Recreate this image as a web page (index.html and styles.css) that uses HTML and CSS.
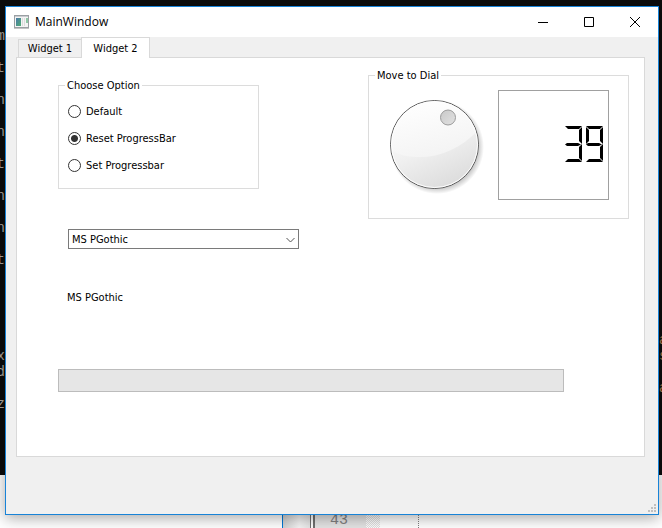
FILE: index.html
```html
<!DOCTYPE html>
<html lang="en">
<head>
<meta charset="utf-8">
<title>MainWindow</title>
<link rel="stylesheet" href="styles.css">
</head>
<body>
<div class="desktop" aria-hidden="true">
  <div class="console">
<pre class="console-left">m

t

n

n

t

n

n

t





x
d

z</pre>
<pre class="console-right">a
s

a</pre>
  </div>
  <div class="editor">
    <div class="editor-panel"></div>
    <div class="editor-side"></div>
    <div class="editor-split"></div>
    <div class="editor-gutter">43</div>
    <div class="editor-fold"></div>
    <div class="editor-code"></div>
  </div>
</div>

<main class="window">
  <header class="titlebar">
    <svg class="app-icon" viewBox="0 0 16 14" aria-hidden="true">
      <defs>
        <linearGradient id="app" x1="0" y1="0" x2="1" y2="1"><stop offset="0" stop-color="#4a78a8"/><stop offset="1" stop-color="#4fae74"/></linearGradient>
      </defs>
      <rect x=".5" y=".5" width="14" height="12" fill="#f4f4f4" stroke="#9a9fa3"/>
      <path d="M1 1.500h13" stroke="#c9ccd0"/>
      <rect x="2" y="3" width="5" height="8" fill="url(#app)"/>
      <path d="M8.500 3v8M10.500 3v8" stroke="#dcdcdc"/>
      <rect x="12" y="3" width="2" height="5" fill="#8fc7a5"/>
      <path d="M0 13.500h15" stroke="#c4c4c4"/>
    </svg>
    <h1 class="title">MainWindow</h1>
    <button class="caption-button" aria-label="Minimize"><svg viewBox="0 0 10 10"><path d="M0 5.500h10"/></svg></button>
    <button class="caption-button" aria-label="Maximize"><svg viewBox="0 0 10 10"><path d="M.5 .5h9v9h-9z"/></svg></button>
    <button class="caption-button" aria-label="Close"><svg viewBox="0 0 10 10"><path d="M0 0l10 10M10 0L0 10"/></svg></button>
  </header>

  <div class="content">
    <div class="tabs" role="tablist">
      <button class="tab" role="tab" aria-selected="false">Widget 1</button>
      <button class="tab tab-active" role="tab" aria-selected="true">Widget 2</button>
    </div>
    <section class="page" role="tabpanel">
      <div class="groups">
        <fieldset class="group options">
          <legend>Choose Option</legend>
          <label class="option"><input type="radio" name="option">Default</label>
          <label class="option"><input type="radio" name="option" checked>Reset ProgressBar</label>
          <label class="option"><input type="radio" name="option">Set Progressbar</label>
        </fieldset>
        <fieldset class="group meter">
          <legend>Move to Dial</legend>
          <div class="dial">
            <svg viewBox="0 0 96 96" aria-hidden="true">
              <defs>
                <radialGradient id="shadow"><stop offset=".88" stop-color="#000" stop-opacity=".2"/><stop offset="1" stop-color="#000" stop-opacity="0"/></radialGradient>
                <linearGradient id="face" x1=".3" y1="0" x2=".75" y2="1"><stop offset="0" stop-color="#fff"/><stop offset=".5" stop-color="#f0f0f0"/><stop offset="1" stop-color="#dadada"/></linearGradient>
                <linearGradient id="shine" x1=".2" y1="0" x2=".6" y2="1"><stop offset="0" stop-color="#fff"/><stop offset="1" stop-color="#f3f3f3"/></linearGradient>
                <linearGradient id="knob" x1="0" y1="0" x2="1" y2="1"><stop offset="0" stop-color="#c8c8c8"/><stop offset="1" stop-color="#e2e2e2"/></linearGradient>
                <clipPath id="disc"><circle cx="45" cy="45" r="43"/></clipPath>
              </defs>
              <circle cx="47" cy="47" r="47" fill="url(#shadow)"/>
              <circle cx="44.500" cy="44.500" r="44" fill="url(#face)" stroke="#5c5c5c"/>
              <path d="M0 0H90V28C72 48 50 58 26 57Q12 57 0 50Z" fill="url(#shine)" clip-path="url(#disc)"/>
              <circle cx="44.500" cy="44.500" r="43" fill="none" stroke="#fff"/>
              <circle cx="58" cy="17.500" r="7.500" fill="url(#knob)" stroke="#9b9b9b"/>
            </svg>
            <input type="range" min="0" max="99" value="39" aria-label="Dial">
          </div>
          <div class="lcd" role="img" aria-label="39">
            <span class="digit"><i class="bar top"></i><i class="bar middle"></i><i class="bar bottom"></i><i class="post upper-right"></i><i class="post lower-right"></i></span>
            <span class="digit"><i class="bar top"></i><i class="bar middle"></i><i class="bar bottom"></i><i class="post upper-left"></i><i class="post upper-right"></i><i class="post lower-right"></i></span>
          </div>
        </fieldset>
      </div>
      <div class="combo">
        <select aria-label="Font"><option>MS PGothic</option></select>
        <svg viewBox="0 0 9 6" aria-hidden="true"><path d="M.5 1l4 4 4-4"/></svg>
      </div>
      <p class="font-name">MS PGothic</p>
      <div class="progress" role="progressbar" aria-label="Progress" aria-valuenow="0"></div>
    </section>
  </div>

  <footer class="statusbar">
    <svg class="grip" viewBox="0 0 8 8" aria-hidden="true"><path d="M6 0h2v2H6zM3 3h2v2H3zM6 3h2v2H6zM0 6h2v2H0zM3 6h2v2H3zM6 6h2v2H6z"/></svg>
  </footer>
</main>
</body>
</html>
```

FILE: styles.css
```css
* {
  box-sizing: border-box;
}

body {
  margin: 0;
  min-height: 100vh;
  padding: 6px 3px 13px 5px;
  display: flex;
  overflow: hidden;
  font: 11px/15px "DejaVu Sans Condensed", "DejaVu Sans", sans-serif;
  color: #000;
}

button,
select {
  font: inherit;
  color: inherit;
}

/* Windows lying behind the main one */
.desktop {
  position: absolute;
  inset: 0;
  z-index: -1;
  display: flex;
  flex-direction: column;
  overflow: hidden;
}

.console {
  flex: 1;
  display: flex;
  justify-content: space-between;
  background: #0c0c0c;
  color: #b0a8a0;
}

.console pre {
  margin: 0;
  font: 14px/16px "Liberation Mono", monospace;
}

.console-left {
  width: 5px;
  padding-top: 28px;
  direction: rtl;
}

.console .console-right {
  width: 3px;
  padding-top: 332px;
  color: #a87c50;
}

.editor {
  height: 53px;
  display: flex;
  background: #fff;
}

.editor-panel {
  width: 283px;
  border-right: 1px solid #0078d7;
}

.editor-side {
  width: 27px;
  background: linear-gradient(90deg, #d0d0d0, #f4f4f4 60%, #e4e4e4);
}

.editor-split {
  width: 5px;
  border: solid #707070;
  border-width: 0 2px 0 1px;
  background: #fff;
}

.editor-gutter {
  width: 51px;
  padding: 38px 0 0 15px;
  background: #e4e4e4;
  color: #808080;
  font: 15px/16px "Liberation Mono", monospace;
}

.editor-fold {
  width: 14px;
  background: repeating-conic-gradient(#fff 0 25%, #e0e0e0 0 50%) 0 0 / 2px 2px;
}

.editor-code {
  width: 39px;
  border-right: 1px dotted #808080;
}

/* Main window */
.window {
  flex: 1;
  min-width: 0;
  display: flex;
  flex-direction: column;
  border: 1px solid #1883d7;
  background: #f0f0f0;
  box-shadow: 0 3px 14px rgba(0, 0, 0, 0.35);
}

.titlebar {
  height: 30px;
  padding-left: 8px;
  display: flex;
  align-items: center;
  background: #fff;
}

.app-icon {
  width: 16px;
  height: 14px;
}

.title {
  flex: 1;
  margin: 0 0 0 5px;
  font: 12px/16px "Open Sans", sans-serif;
}

.caption-button {
  width: 46px;
  height: 30px;
  padding: 0;
  border: 0;
  background: none;
  display: grid;
  place-items: center;
}

.caption-button svg {
  width: 10px;
  height: 10px;
  fill: none;
  stroke: #000;
}

.content {
  flex: 1;
  padding: 0 13px 0 10px;
  display: flex;
  flex-direction: column;
}

.tabs {
  height: 20px;
  padding-left: 2px;
  display: flex;
  align-items: flex-end;
}

.tab {
  width: 63px;
  height: 18px;
  padding: 0;
  border: 1px solid #d9d9d9;
  border-width: 1px 0 0 1px;
  background: #f0f0f0;
}

.tab-active {
  position: relative;
  width: 69px;
  height: 21px;
  margin-bottom: -1px;
  border-width: 1px 1px 0;
  background: #fff;
}

.page {
  flex: 1;
  padding: 10px 15px 0 41px;
  border: 1px solid #d9d9d9;
  background: #fff;
}

.groups {
  display: flex;
  justify-content: space-between;
  align-items: flex-start;
}

.group {
  margin: 0;
  border: 1px solid #dcdcdc;
}

.group legend {
  padding: 0 2px;
  margin-left: -3px;
}

.options {
  width: 201px;
  height: 111px;
  margin-top: 10px;
  padding: 5px 9px;
}

.option {
  height: 27px;
  display: flex;
  align-items: center;
  gap: 5px;
}

.option input {
  appearance: none;
  width: 13px;
  height: 13px;
  margin: 0;
  border: 1px solid #333;
  border-radius: 50%;
  background: #fff;
}

.option input:checked {
  background: radial-gradient(circle, #333 3px, #fff 4px);
}

.meter {
  width: 261px;
  height: 151px;
  padding: 7px 19px 0 9px;
  display: flex;
  justify-content: space-between;
}

.dial {
  position: relative;
  width: 96px;
  height: 96px;
  margin: 10px 0 0 12px;
}

.dial svg {
  display: block;
}

.dial input {
  position: absolute;
  inset: 0;
  width: 100%;
  height: 100%;
  margin: 0;
  opacity: 0;
}

.lcd {
  width: 111px;
  height: 110px;
  padding: 0 5px 2px 0;
  border: 1px solid #a0a0a0;
  display: flex;
  justify-content: flex-end;
  align-items: center;
  gap: 4px;
}

.digit {
  position: relative;
  width: 17px;
  height: 36px;
}

/* Segments of a seven-segment digit */
.bar,
.post {
  position: absolute;
  border: 3px solid transparent;
}

.bar {
  left: 0;
  right: 0;
  height: 3px;
}

.top {
  top: 0;
  border-bottom: 0;
  border-top-color: #000;
}

.bottom {
  bottom: 0;
  border-top: 0;
  border-bottom-color: #000;
}

.middle {
  top: 17px;
  right: 1px;
  border: 0;
  background: #000;
  clip-path: polygon(0 50%, 2px 0, 13px 0, 100% 50%, 13px 100%, 2px 100%);
}

.post {
  width: 3px;
  height: 17px;
}

.upper-left {
  top: 1px;
  left: 0;
  border-right: 0;
  border-left-color: #000;
}

.upper-right {
  top: 1px;
  right: 0;
  border-left: 0;
  border-right-color: #000;
}

.lower-right {
  top: 18px;
  right: 0;
  border-left: 0;
  border-right-color: #000;
}

.combo {
  position: relative;
  width: 231px;
  margin: 10px 0 0 10px;
}

.combo select {
  appearance: none;
  display: block;
  width: 100%;
  height: 20px;
  padding: 0 3px;
  border: 1px solid #7a7a7a;
  border-radius: 0;
  background: #fff;
}

.combo svg {
  position: absolute;
  top: 8px;
  right: 4px;
  width: 9px;
  height: 6px;
  fill: none;
  stroke: #555;
  pointer-events: none;
}

.font-name {
  margin: 41px 0 0 9px;
}

.progress {
  height: 23px;
  margin: 64px 65px 0 0;
  border: 1px solid #bcbcbc;
  background: #e6e6e6;
}

.statusbar {
  height: 57px;
  padding: 2px;
  display: flex;
  justify-content: flex-end;
  align-items: flex-end;
}

.grip {
  width: 8px;
  height: 8px;
  fill: #bfbfbf;
}
```
